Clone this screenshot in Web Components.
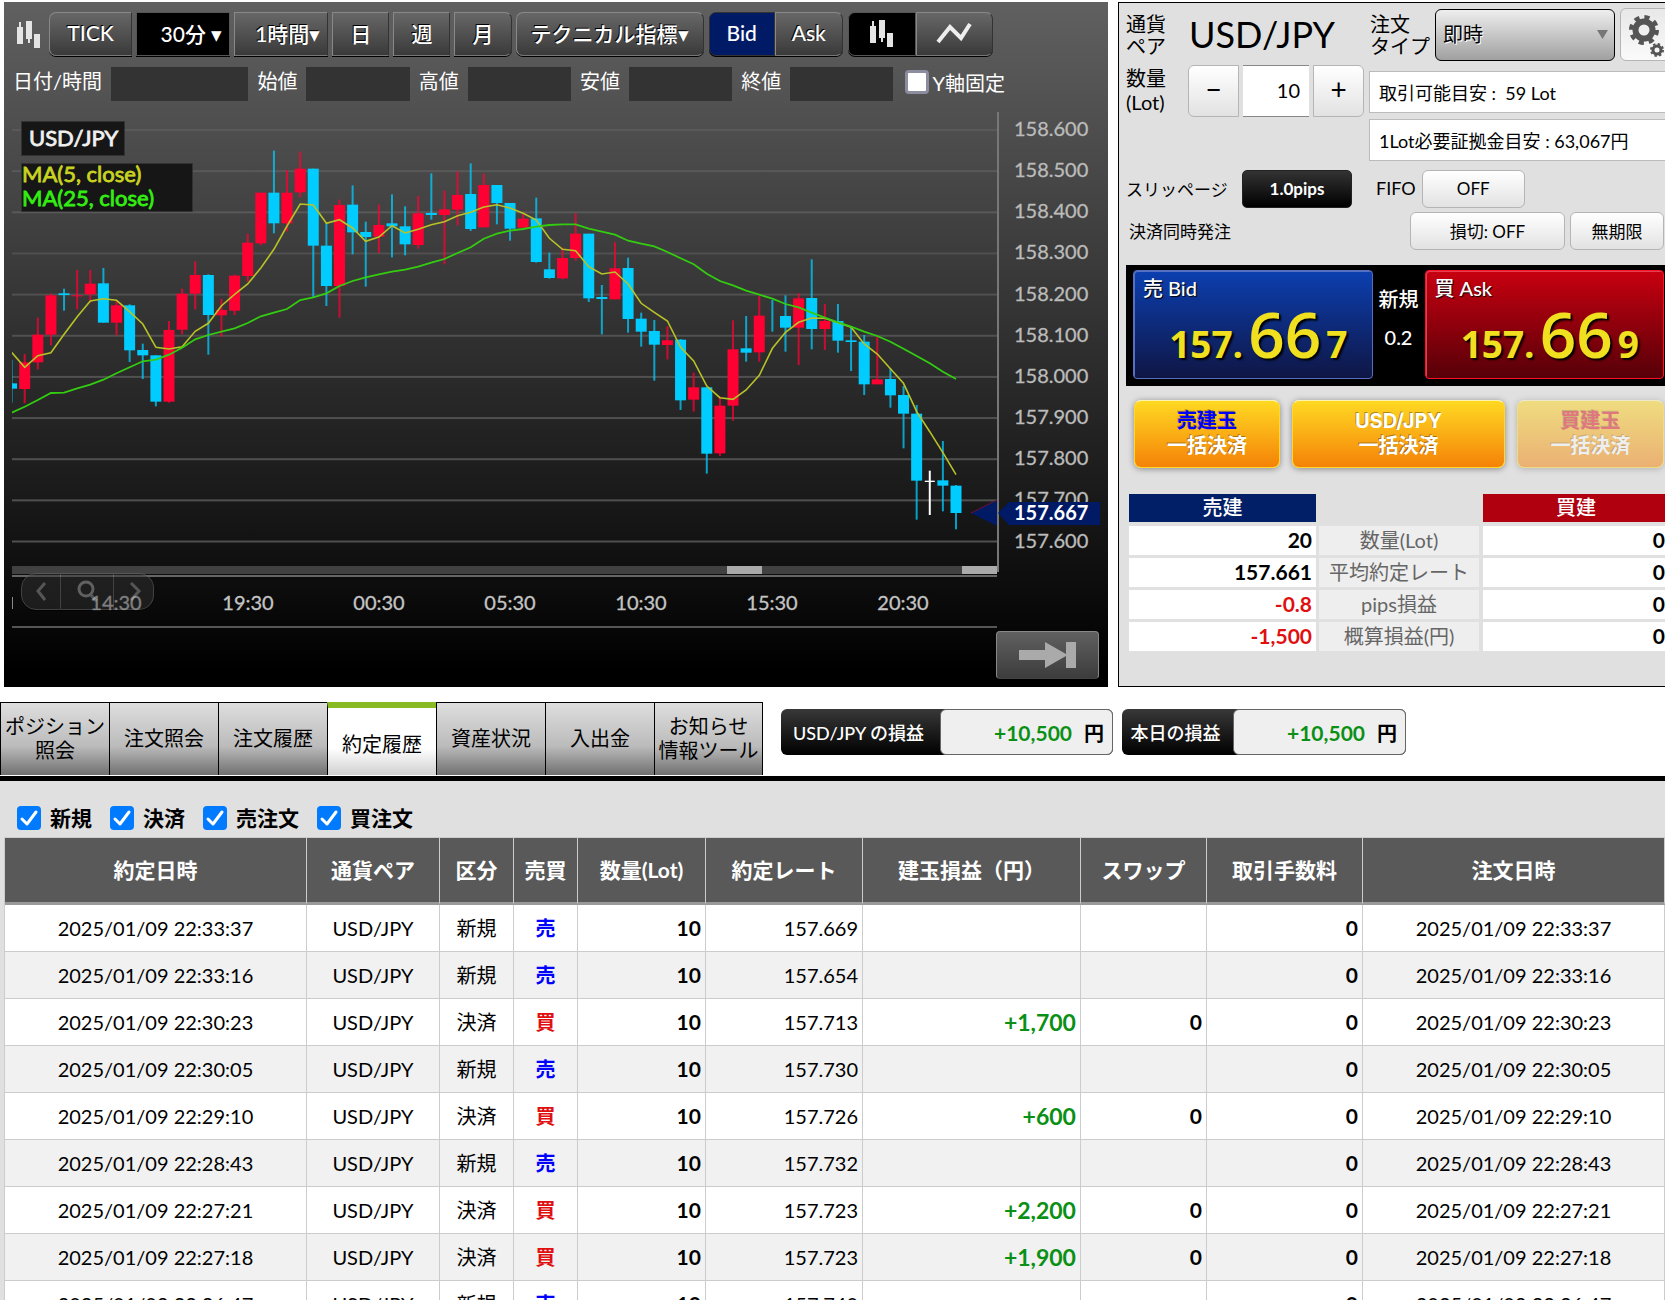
<!DOCTYPE html>
<html lang="ja">
<head>
<meta charset="utf-8">
<title>USD/JPY トレード</title>
<style>
html,body{margin:0;height:100%;background:#fff;color:#000}
body{font-family:Lato,"Noto Sans CJK JP",sans-serif;font-size:20px;overflow:hidden}
</style>
</head>
<body>
<trade-app></trade-app>
<script>
const define = (name, html, setup) => {
  const tpl = document.createElement('template');
  tpl.innerHTML = '<style>*{box-sizing:border-box}button,input,select{font:inherit;color:inherit;margin:0}button{cursor:pointer}</style>' + html;
  customElements.define(name, class extends HTMLElement {
    constructor() {
      super();
      this.attachShadow({mode: 'open'}).append(tpl.content.cloneNode(true));
    }
    connectedCallback() { if (setup) setup(this, this.shadowRoot); }
  });
};

const CANDLES = `<svg viewBox="0 0 26 30" width="26" height="30" aria-hidden="true"><g fill="#e4e4e4"><rect x="1" y="8" width="6" height="17"/><rect x="3" y="3" width="2" height="5"/><rect x="10" y="2" width="6" height="18"/><rect x="12" y="20" width="2" height="4"/><rect x="18" y="15" width="6" height="14"/></g></svg>`;

/* toolbar button: shape = first | mid | last | solo, tone = plain | black | navy */
define('tool-button', `<style>
:host{display:block}
button{display:flex;align-items:center;justify-content:center;width:100%;height:44px;padding:0 8px 2px;white-space:nowrap;color:#fff;font-size:21px;font-weight:500;
 background:linear-gradient(#676767,#3a3a3a);border:1px solid #888;border-right-color:#333;border-bottom-color:#777;box-shadow:0 1px #000;text-shadow:-1px -1px #000}
:host([tone=black]) button{background:#000;border-color:#555}
:host([tone=navy]) button{background:#001a66;border-color:#333;text-shadow:none}
:host([shape=first]) button{border-radius:7px 0 0 7px}
:host([shape=last]) button{border-radius:0 7px 7px 0}
:host([shape=solo]) button{border-radius:7px}
:host([menu]) button{justify-content:flex-end;padding:0 7px 2px}
</style><button type="button"><slot></slot></button>`);

define('quote-field', `<style>
:host{display:flex;align-items:flex-start;gap:9px;flex:152 1 0;min-width:0}
:host([wide]){flex:235 1 0}
label{white-space:nowrap;line-height:28px;color:#fff}
input{flex:1 1 0;width:0;min-width:0;height:34px;border:0;background:#333;color:#fff;padding:0 6px}
</style><label for="v"></label><input id="v" readonly>`,
(el, root) => { root.querySelector('label').textContent = el.getAttribute('label'); });

define('price-chart', `<style>
:host{display:block;position:relative}
svg.plot{display:block;width:100%;height:auto}
.nav{position:absolute;left:17px;bottom:77px;display:flex;opacity:.6}
.nav button{width:53px;height:37px;padding:0;display:grid;place-items:center;background:#333c;border:1px solid #666;border-left-width:0;box-shadow:0 1px #000}
.nav button:first-child{width:40px;border-left-width:1px;border-radius:15px 0 0 15px}
.nav button:last-child{width:40px;border-radius:0 15px 15px 0}
.latest{position:absolute;right:9px;bottom:8px;width:103px;height:48px;padding:0;display:grid;place-items:center;border:1px solid #888;border-bottom-color:#444;border-radius:4px;background:linear-gradient(#606060,#3c3c3c)}
</style>
<svg class="plot" viewBox="4 106 1104 581" font-size="20"></svg>
<div class="nav">
<button type="button" aria-label="前へ"><svg width="16" height="24" viewBox="0 0 16 24"><path d="M12 3 5 11l7 9" fill="none" stroke="#888" stroke-width="3"/></svg></button>
<button type="button" aria-label="拡大"><svg width="24" height="26" viewBox="0 0 24 26"><circle cx="11" cy="10" r="7" fill="none" stroke="#999" stroke-width="3"/><path d="m16 16 5 6" stroke="#888" stroke-width="3"/></svg></button>
<button type="button" aria-label="次へ"><svg width="16" height="24" viewBox="0 0 16 24"><path d="m5 3 8 8-8 9" fill="none" stroke="#888" stroke-width="3"/></svg></button>
</div>
<button class="latest" type="button" aria-label="最新へ"><svg width="58" height="26" viewBox="0 0 58 26" fill="#aaa"><path d="M0 8h26V0l21 12V0h10v26H47V14L26 26v-8H0z"/></svg></button>`,
(el, root) => {
  const svg = root.querySelector('svg.plot');
  /* colour, high, body top, body bottom, low; three levels to one unit of the view box */
  const candles = `B 690 760 776 818|R 672 697 777 820|R 563 614 697 718|R 491 496 614 646|B 476 490 495 542|R 420 496 499 538|R 420 461 493 518|B 414 460 578 578|R 510 526 578 616|B 523 526 661 696|B 641 660 676 747|B 676 676 815 829|R 573 600 815 818|R 476 491 599 613|R 394 435 491 538|B 433 435 555 674|R 507 540 556 620|R 434 437 542 555|R 311 338 438 455|R 188 188 340 346|B 62 188 280 310|R 120 188 280 304|R 65 116 187 202|B 116 116 347 502|B 280 347 468 528|R 209 225 468 563|B 166 224 307 373|B 275 306 321 470|R 224 285 320 369|B 193 280 289 382|B 229 289 343 376|R 198 250 345 356|B 130 249 255 269|R 182 238 255 403|R 124 195 239 286|B 100 192 297 303|R 131 165 292 292|B 165 165 219 283|B 219 219 296 332|R 250 266 293 293|B 203 265 396 398|B 368 418 444 446|R 353 384 445 448|R 250 311 384 392|B 311 311 505 516|B 465 501 507 613|R 337 415 508 508|B 383 414 567 608|B 548 566 605 650|B 570 603 644 752|R 589 631 645 688|B 627 629 811 840|R 728 772 809 845|B 772 772 971 1031|R 800 827 970 978|R 571 658 827 872|B 558 655 668 695|R 498 557 667 695|B 510 510 510 605|B 496 558 593 665|R 490 505 593 705|B 388 504 597 658|R 522 573 597 660|B 522 573 632 668|B 588 631 636 723|B 615 635 763 795|R 620 748 763 763|B 715 747 796 833|B 768 795 851 955|B 825 851 1052 1169|W 1022 1052 1056 1155|B 933 1051 1067 1144|B 1065 1067 1149 1198`.split('|').map(s => { const [c, ...n] = s.split(' '); return [c, ...n.map(Number)]; });
  const ma5 = [667,712,677,668,613,560,513,506,511,545,582,652,657,650,604,580,527,493,462,414,358,288,222,225,280,269,294,334,321,287,309,298,284,275,257,247,231,224,234,250,270,325,358,362,410,432,426,462,520,547,573,652,693,768,803,808,780,736,655,607,577,564,565,578,592,642,672,716,760,845,905,968,1034];
  const ma25 = [848,830,810,789,788,775,764,749,730,712,694,689,674,653,628,615,605,595,579,559,548,537,510,502,490,468,453,442,433,425,419,410,398,387,369,352,326,311,302,297,290,285,283,283,296,305,314,332,341,349,366,385,403,431,453,466,482,494,506,522,532,548,563,577,590,605,618,635,656,678,700,725,747];
  const fill = {R: '#ff0033', B: '#00ccff', W: '#fff'};
  const x = i => 24.7 + 13.117 * (i - 1), y = v => 130 + v / 3;
  let s = '';
  for (let i = 0; i <= 10; i++) {
    const gy = 130 + i * 41.15, shade = i < 3 ? '#595959' : '#505050';
    s += `<rect x="12" y="${gy - 1}" width="985" height="2" fill="${shade}"/>` +
      `<text x="1014" y="${gy + 6}" fill="#bbb" stroke="#bbb" stroke-width=".3">${(158.6 - i / 10).toFixed(3)}</text>`;
  }
  s += '<clipPath id="c"><rect x="12" y="106" width="985" height="460"/></clipPath><g clip-path="url(#c)">';
  candles.forEach(([c, h, t, b, l], i) => {
    s += `<rect x="${x(i) - 1}" y="${y(h)}" width="2" height="${(l - h) / 3}" fill="${fill[c]}" opacity="${c === 'W' ? 1 : .75}"/>`;
    if (b > t) s += `<rect x="${x(i) - (c === 'W' ? 5 : 5.5)}" y="${y(t)}" width="${c === 'W' ? 10 : 11}" height="${(b - t) / 3}" fill="${fill[c]}"/>`;
  });
  const line = a => a.map((v, i) => x(i).toFixed(1) + ',' + y(v).toFixed(1)).join(' ');
  s += `<polyline points="${line(ma5)}" fill="none" stroke="#b8c226" stroke-width="1.6"/><polyline points="${line(ma25)}" fill="none" stroke="#33cc11" stroke-width="1.8"/></g>`;
  s += `<rect x="997" y="112" width="2" height="460" fill="#777"/>
  <rect x="12" y="566" width="985" height="8" fill="#414141"/><rect x="12" y="575" width="985" height="2" fill="#666"/>
  <rect x="727" y="566" width="35" height="8" fill="#aaa"/><rect x="962" y="566" width="35" height="8" fill="#aaa"/>
  <rect x="12" y="626" width="985" height="2" fill="#555"/>
  <path d="M971 513 997 500v26z" fill="#001a66"/><path d="M971 513 997 500" stroke="#701030"/>
  <path d="M998 513 1009 502h91v23h-91z" fill="#001a66"/><text x="1014" y="520" fill="#fff" font-weight="700">157.667</text>
  <rect x="12" y="597" width="1" height="12" fill="#888"/>
  <g fill="#c4c4c4" stroke="#c4c4c4" stroke-width=".3" text-anchor="middle"><text x="116" y="610">14:30</text>`;
  ['19:30', '00:30', '05:30', '10:30', '15:30', '20:30'].forEach((t, i) => { s += `<text x="${248 + i * 131}" y="610">${t}</text>`; });
  s += `</g><g font-size="22" stroke-width=".8"><rect x="21.500" y="121.500" width="103" height="34" fill="#161616" stroke="#333"/><text x="29" y="146" fill="#f0f0f0" stroke="#f0f0f0">USD/JPY</text>
  <rect x="21.500" y="163.500" width="171" height="48" fill="#161616" stroke="#333"/><text x="22" y="182" fill="#c8d420" stroke="#c8d420">MA(5, close)</text><text x="22" y="206" fill="#33ee11" stroke="#33ee11">MA(25, close)</text></g>`;
  svg.innerHTML = s;
});

define('chart-panel', `<style>
:host{display:block;background:linear-gradient(#606060,#000 98%)}
.bar{display:flex;align-items:center;gap:4px;padding:9px 115px 0 12px;height:54px}
.bar>svg{flex:none;margin-right:3px}
.bar tool-button{flex:var(--w) 1 0;min-width:0}
.join{margin-left:-4px}
.gap{margin-left:1px}
.info{display:flex;gap:9px;padding:11px 103px 5px 9px;height:50px}
.lock{display:flex;flex:none;align-items:center;gap:3px;height:34px;margin-left:3px;white-space:nowrap;color:#fff;padding-bottom:4px}
.lock input{appearance:none;width:24px;height:24px;background:#fff;border:3px solid #8d8da0;border-radius:4px}
</style>
<div class="bar">${CANDLES}
<tool-button shape="first" style="--w:83">TICK</tool-button>
<tool-button tone="black" menu style="--w:94">30分 ▾</tool-button>
<tool-button menu style="--w:94">1時間▾</tool-button>
<tool-button style="--w:57">日</tool-button>
<tool-button style="--w:57">週</tool-button>
<tool-button shape="last" style="--w:57">月</tool-button>
<tool-button shape="solo" style="--w:188">テクニカル指標▾</tool-button>
<tool-button class="gap" shape="first" tone="navy" style="--w:66">Bid</tool-button>
<tool-button class="join" shape="last" style="--w:68">Ask</tool-button>
<tool-button class="gap" shape="first" tone="black" style="--w:68">${CANDLES}</tool-button>
<tool-button class="join" shape="last" style="--w:77"><svg viewBox="0 0 36 26" width="36" height="26" aria-label="ライン"><path d="M2 22 14 7l11 11L34 4" fill="none" stroke="#eee" stroke-width="4"/></svg></tool-button>
</div>
<div class="info">
<quote-field wide label="日付/時間"></quote-field><quote-field label="始値"></quote-field><quote-field label="高値"></quote-field><quote-field label="安値"></quote-field><quote-field label="終値"></quote-field>
<label class="lock"><input type="checkbox">Y軸固定</label>
</div>
<price-chart></price-chart>`);

define('rate-button', `<style>
:host{display:block}
button{display:block;width:100%;height:109px;padding:0 9px 9px;text-align:left;color:#fff;border-radius:4px;border:1px solid #5570c0;background:linear-gradient(#0c3fb0,#0f1645);box-shadow:inset 1px 1px #5570c0;text-shadow:1px 1px 1px #000}
:host([side=ask]) button{border-color:#ff1028;background:linear-gradient(#c80010,#560008);box-shadow:inset 1px 1px #e04050}
.side{display:block;line-height:28px;font-weight:500}
.rate{display:flex;align-items:baseline;justify-content:flex-end;gap:5px;height:64px;line-height:64px;padding-right:15px;color:#f0e020;font-family:"Open Sans",sans-serif;font-weight:700;font-size:37px;text-shadow:2px 2px 2px #000}
.rate b{font-size:64px;font-weight:600}
</style><button type="button"><span class="side"><slot></slot></span><span class="rate"><span class="a"></span><b></b><span class="z"></span></span></button>`,
(el, root) => {
  const r = el.getAttribute('rate');
  root.querySelector('.a').textContent = r.slice(0, 4);
  root.querySelector('b').textContent = r.slice(4, 6);
  root.querySelector('.z').textContent = r.slice(6);
});

define('settle-button', `<style>
:host{display:block}
button{width:100%;height:68px;padding:0;border:1px solid #ffd829;border-top-color:#fff3b0;border-radius:7px;background:linear-gradient(#ffd922,#f58208);box-shadow:0 1px 6px #0006;color:#fff;font-family:Inter,"Noto Sans CJK JP",sans-serif;font-weight:700;line-height:25px;text-shadow:-1px -1px #0005}
:host([disabled]) button{opacity:.5}
.first{display:block;color:var(--c,#fff)}
</style><button type="button"><span class="first"><slot name="target"></slot></span><slot></slot></button>`,
(el, root) => { root.querySelector('button').disabled = el.hasAttribute('disabled'); });

define('position-summary', `<style>
:host{display:block}
table{width:100%;border-collapse:separate;border-spacing:0;table-layout:fixed}
th,td{height:32px;padding:0 4px 2px;line-height:26px;border-bottom:3px solid #e0e0e0;background:#fff;text-align:right;font-weight:700;font-size:21px}
thead th,thead td{border-bottom-width:4px;color:#fff;text-align:center;font-weight:500;font-size:20px}
thead .s{background-color:#001f66}thead .b{background-color:#b0000f}thead .n{background:none}
tbody th{background-color:#eee;color:#666;text-align:center;font-weight:400;font-size:20px;border-left:3px solid #e0e0e0;border-right:4px solid #e0e0e0;padding:0 0 2px}
tbody .minus{color:#e01010}
</style><table><colgroup><col style="width:187px"><col style="width:167px"><col></colgroup>
<thead><tr><th class="s">売建</th><td class="n"></td><th class="b">買建</th></tr></thead>
<tbody><tr><td>20</td><th>数量(Lot)</th><td>0</td></tr><tr><td>157.661</td><th>平均約定レート</th><td>0</td></tr><tr><td class="minus">-0.8</td><th>pips損益</th><td>0</td></tr><tr><td class="minus">-1,500</td><th>概算損益(円)</th><td>0</td></tr></tbody></table>`);

define('order-panel', `<style>
:host{display:block;background:#e0e0e0;border:1px solid #000;padding:5px 0 0 7px;min-height:685px}
.top{display:grid;grid-template-columns:62px 181px 1fr;row-gap:4px}
.cap{line-height:22px;padding-top:5px;white-space:nowrap}
.cap.qty{line-height:24px;padding-top:1px}
.pair{font-size:36px;line-height:52px;padding-left:1px}
.type{display:flex;gap:5px;padding-left:1px}
.type .cap{width:60px}
.sel{display:grid;flex:1;align-items:center}
.sel>*{grid-area:1/1}
.sel::after{content:"";grid-area:1/1;justify-self:end;margin-right:7px;width:11px;height:9px;background:#777;clip-path:polygon(0 0,100% 0,50% 100%);pointer-events:none}
select{appearance:none;width:100%;height:52px;margin-top:1px;border:1px solid #000;border-radius:6px;padding:0 7px 2px;background:linear-gradient(#eee,#a0a0a0);text-shadow:1px 1px #fff}
.light{background:linear-gradient(#fff,#e2e2e2);border:1px solid #b5b5b5;border-radius:6px;height:38px;padding:0 0 2px;font-size:17px;white-space:nowrap}
.gear{width:51px;height:53px;flex:none;padding:5px 0 0 8px;text-align:left;background:linear-gradient(#e8e8e8,#fafafa)}
.step{display:flex;gap:4px;width:176px;height:52px}
.step button{width:51px;height:52px;font-size:28px;padding-bottom:4px}
.step button:first-child{border-radius:6px 0 0 6px}.step button:last-child{border-radius:0 6px 6px 0}
.step input{width:66px;border:0;border-top:1px solid #888;border-bottom:1px solid #888;text-align:right;padding:0 9px 2px;background:#fff}
.notes{display:grid;gap:6px;padding-top:6px}
.notes div{height:42px;background:#fff;border:1px solid #bbb;line-height:42px;padding-left:9px;font-size:18px;white-space:pre}
.row{display:flex;align-items:center;height:38px;font-size:17px}
.row>span,.row>label{padding-bottom:2px}
.one{margin-top:9px}.two{margin-top:4px;padding:0 7px 0 3px;gap:5px}
.dark{width:110px;height:38px;border:1px solid #222;border-radius:5px;background:linear-gradient(#333,#000);color:#fff;font-weight:700;padding:0 0 2px}
.rates{display:grid;grid-template-columns:1fr 52px 1fr;background:#000;margin-top:15px;height:121px;padding:5px 7px 0;color:#fff}
.mid{text-align:center;font-weight:500;line-height:38px;padding-top:10px}
.settle{display:grid;grid-template-columns:146px 213px 1fr;gap:12px;padding:14px 7px 0 8px}
position-summary{margin:26px 2px 0 3px}
</style>
<div class="top">
<div class="cap">通貨<br>ペア</div><div class="pair">USD/JPY</div>
<div class="type"><label class="cap" for="type">注文<br>タイプ</label><div class="sel"><select id="type"><option>即時</option></select></div>
<button class="light gear" type="button" aria-label="設定"><svg width="36" height="43" viewBox="0 0 36 43"><g fill="none" stroke="#555"><circle cx="15" cy="16" r="8.500" stroke-width="6"/><circle cx="15" cy="16" r="13" stroke-width="4" stroke-dasharray="5.200 5.010"/><circle cx="28" cy="36" r="4" stroke-width="3"/><circle cx="28" cy="36" r="6" stroke-width="2" stroke-dasharray="2.400 2.310"/></g></svg></button></div>
<label class="cap qty" for="qty">数量<br>(Lot)</label>
<div class="step"><button class="light" type="button">−</button><input id="qty" value="10"><button class="light" type="button">+</button></div>
<div class="notes"><div>取引可能目安 :&nbsp; 59 Lot</div><div>1Lot必要証拠金目安 : 63,067円</div></div>
</div>
<div class="row one"><span style="width:116px">スリッページ</span><button class="dark" type="button">1.0pips</button><label for="fifo" style="margin:0 6px 0 24px;font-size:18px">FIFO</label><button id="fifo" class="light" type="button" style="width:103px">OFF</button></div>
<div class="row two"><span style="flex:1">決済同時発注</span><button class="light" type="button" style="width:155px">損切: OFF</button><button class="light" type="button" style="width:94px">無期限</button></div>
<div class="rates"><rate-button side="bid" rate="157.667">売 Bid</rate-button><div class="mid">新規<br>0.2</div><rate-button side="ask" rate="157.669">買 Ask</rate-button></div>
<div class="settle"><settle-button style="--c:#0000ff"><span slot="target">売建玉</span>一括決済</settle-button><settle-button><span slot="target">USD/JPY</span>一括決済</settle-button><settle-button disabled style="--c:#e01020"><span slot="target">買建玉</span>一括決済</settle-button></div>
<position-summary></position-summary>`);

define('tab-item', `<style>
:host{display:block;flex:0 1 109px}
a{display:flex;align-items:center;justify-content:center;text-align:center;height:73px;padding-bottom:2px;white-space:nowrap;line-height:24px;color:#000;text-decoration:none;border:solid #000;border-width:1px 0 0 1px;background:linear-gradient(#dedede,#bbb 60%,#707070)}
:host(:last-of-type) a{border-right-width:1px}
:host([selected]) a{background:linear-gradient(#fff 60%,#d0d0d0);border-top:6px solid #88bb22;padding-top:6px}
</style><a href="#"><span><slot></slot></span></a>`);

define('profit-badge', `<style>
:host{display:flex;height:46px;border-radius:6px;background:linear-gradient(#383838,#000);white-space:nowrap}
.name{flex:none;display:grid;place-items:center;width:var(--name);color:#fff;font-size:18px;font-weight:500;padding-right:4px}
.box{display:flex;align-items:center;justify-content:flex-end;gap:12px;width:173px;padding-right:8px;border:1px solid #666;border-radius:6px;background:#efefef;font-weight:700}
.val{color:#0a9015;font-size:21px}
</style><span class="name"><slot></slot></span><span class="box"><span class="val"></span><span>円</span></span>`,
(el, root) => { root.querySelector('.val').textContent = el.getAttribute('value'); });

define('check-filter', `<style>
:host{display:block}
label{display:flex;align-items:center;gap:9px;font-size:21px;font-weight:700;line-height:24px}
.tick{display:grid;width:24px;height:24px}
.tick>*{grid-area:1/1}
input{appearance:none;width:24px;height:24px;border-radius:4px;background:#007aff}
svg{pointer-events:none;z-index:1}
</style><label><span class="tick"><input type="checkbox" checked><svg width="24" height="24" viewBox="0 0 24 24"><path d="m5 13 5 5 9-12" fill="none" stroke="#fff" stroke-width="3" stroke-linecap="round" stroke-linejoin="round"/></svg></span><slot></slot></label>`);

define('history-table', `<style>
:host{display:block}
table{width:100%;border-collapse:separate;border-spacing:0;table-layout:fixed;border-left:1px solid #ccc}
th,td{border-right:1px solid #ccc;border-bottom:1px solid #ccc;padding:0 4px;white-space:nowrap;text-align:center}
th{height:68px;padding-bottom:2px;background:#595959;color:#fff;border-bottom:3px solid #999;border-top:1px solid #ccc;font-weight:700;font-size:21px}
td{height:47px;padding-bottom:1px;background:#fff;font-weight:400}
tr:nth-child(even) td{background:#f1f1f1}
.r{text-align:right}.b{text-align:right;font-weight:700;font-size:21px}
.sell{color:#0000ff;font-weight:700}.buy{color:#e01010;font-weight:700}
.g{text-align:right;font-weight:700;font-size:23px;color:#0a9015}
</style><table><colgroup></colgroup><thead><tr></tr></thead><tbody></tbody></table>`,
(el, root) => {
  const cols = {'約定日時': 302, '通貨ペア': 133, '区分': 74, '売買': 64, '数量(Lot)': 128, '約定レート': 157, '建玉損益（円）': 218, 'スワップ': 126, '取引手数料': 156, '注文日時': 302};
  root.querySelector('colgroup').innerHTML = Object.values(cols).map(w => `<col style="width:${(w / 16.6).toFixed(2)}%">`).join('');
  root.querySelector('thead tr').innerHTML = Object.keys(cols).map(c => `<th>${c}</th>`).join('');
  const rows = [['22:33:37', '売', '669', ''], ['22:33:16', '売', '654', ''], ['22:30:23', '買', '713', '+1,700'], ['22:30:05', '売', '730', ''], ['22:29:10', '買', '726', '+600'], ['22:28:43', '売', '732', ''], ['22:27:21', '買', '723', '+2,200'], ['22:27:18', '買', '723', '+1,900'], ['22:26:47', '売', '740', '']];
  root.querySelector('tbody').innerHTML = rows.map(([t, side, rate, pl]) => `<tr><td>2025/01/09 ${t}</td><td>USD/JPY</td><td>${pl ? '決済' : '新規'}</td><td class="${side === '売' ? 'sell' : 'buy'}">${side}</td><td class="b">10</td><td class="r">157.${rate}</td><td class="g">${pl}</td><td class="b">${pl ? '0' : ''}</td><td class="b">0</td><td>2025/01/09 ${t}</td></tr>`).join('');
});

define('trade-app', `<style>
:host{display:flex;flex-direction:column;height:100vh;overflow:hidden}
.upper{display:grid;grid-template-columns:minmax(0,1104fr) minmax(0,554fr);gap:10px;padding:2px 0 0 4px;margin-right:-7px;align-items:start}
.middle{display:flex;align-items:flex-start;padding-top:15px;border-bottom:5px solid #000;height:94px;box-sizing:border-box;flex:none}
.tabs{display:flex;flex:0 1 764px}
.badges{display:flex;gap:9px;padding:7px 0 0 17px}
.lower{flex:1;min-height:0;overflow:hidden;background:#e0e0e0;padding:25px 0 0 4px}
.filters{display:flex;gap:18px;padding:0 13px 7px}
</style>
<div class="upper"><chart-panel></chart-panel><order-panel></order-panel></div>
<div class="middle"><nav class="tabs"><tab-item>ポジション<br>照会</tab-item><tab-item>注文照会</tab-item><tab-item>注文履歴</tab-item><tab-item selected>約定履歴</tab-item><tab-item>資産状況</tab-item><tab-item>入出金</tab-item><tab-item>お知らせ<br>情報ツール</tab-item></nav>
<div class="badges"><profit-badge value="+10,500" style="--name:159px">USD/JPY の損益</profit-badge><profit-badge value="+10,500" style="--name:111px">本日の損益</profit-badge></div></div>
<div class="lower"><div class="filters"><check-filter>新規</check-filter><check-filter>決済</check-filter><check-filter>売注文</check-filter><check-filter>買注文</check-filter></div><history-table></history-table></div>`);
</script>
</body>
</html>
